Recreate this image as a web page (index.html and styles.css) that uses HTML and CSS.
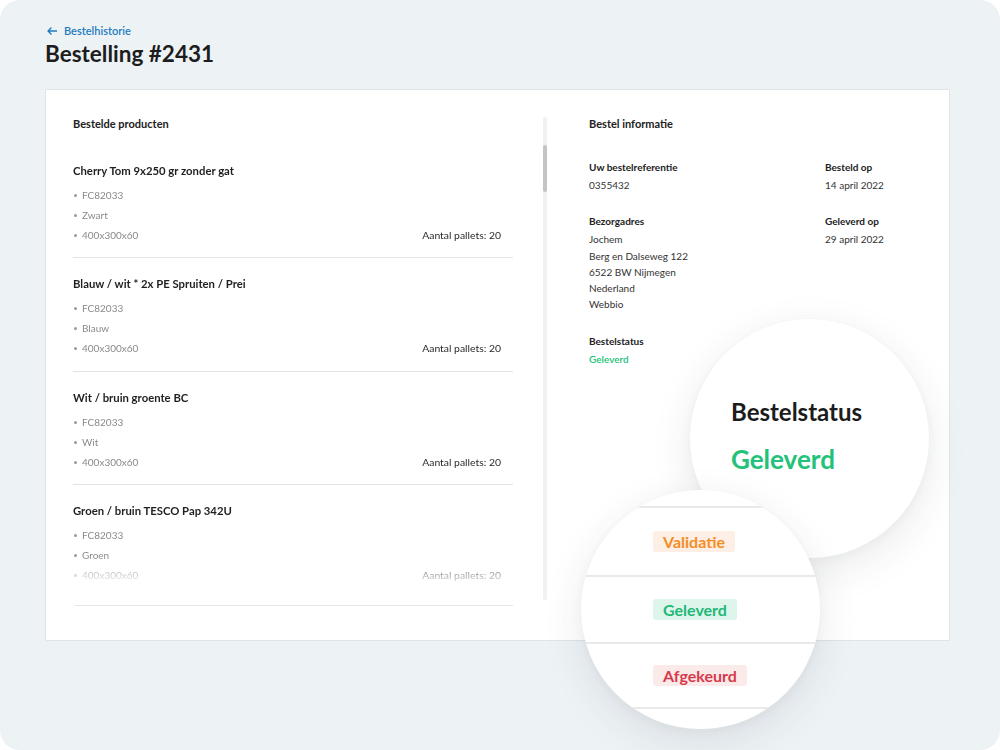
FILE: index.html
```html
<!DOCTYPE html>
<html lang="nl">
<head>
<meta charset="utf-8">
<title>Bestelling #2431</title>
<link rel="stylesheet" href="styles.css">
</head>
<body>
<div class="frame">
  <a class="back" href="#">
    <svg class="back-icon" width="10" height="8" viewBox="0 0 10 8" aria-hidden="true">
      <path d="M1 4H10M4 1L1 4L4 7" fill="none" stroke="currentColor" stroke-width="1.4" stroke-linecap="round" stroke-linejoin="round"/>
    </svg>
    Bestelhistorie
  </a>
  <h1 class="title">Bestelling #2431</h1>

  <section class="card">
    <div class="products">
      <div class="products-main">
        <h2 class="section-title">Bestelde producten</h2>
        <div class="product-list">
          <article class="product">
            <h3 class="product-name">Cherry Tom 9x250 gr zonder gat</h3>
            <ul class="specs">
              <li>FC82033</li>
              <li>Zwart</li>
              <li class="spec-last"><span>400x300x60</span><span class="pallets">Aantal pallets: 20</span></li>
            </ul>
          </article>
          <article class="product">
            <h3 class="product-name">Blauw / wit * 2x PE Spruiten / Prei</h3>
            <ul class="specs">
              <li>FC82033</li>
              <li>Blauw</li>
              <li class="spec-last"><span>400x300x60</span><span class="pallets">Aantal pallets: 20</span></li>
            </ul>
          </article>
          <article class="product">
            <h3 class="product-name">Wit / bruin groente BC</h3>
            <ul class="specs">
              <li>FC82033</li>
              <li>Wit</li>
              <li class="spec-last"><span>400x300x60</span><span class="pallets">Aantal pallets: 20</span></li>
            </ul>
          </article>
          <article class="product">
            <h3 class="product-name">Groen / bruin TESCO Pap 342U</h3>
            <ul class="specs">
              <li>FC82033</li>
              <li>Groen</li>
              <li class="spec-last"><span>400x300x60</span><span class="pallets">Aantal pallets: 20</span></li>
            </ul>
          </article>
        </div>
        <div class="list-end"></div>
      </div>
      <div class="scrollbar"><div class="scrollbar-thumb"></div></div>
    </div>

    <div class="info">
      <h2 class="section-title">Bestel informatie</h2>
      <dl class="info-grid">
        <div class="field">
          <dt>Uw bestelreferentie</dt>
          <dd>0355432</dd>
        </div>
        <div class="field">
          <dt>Besteld op</dt>
          <dd>14 april 2022</dd>
        </div>
        <div class="field">
          <dt>Bezorgadres</dt>
          <dd>Jochem<br>Berg en Dalseweg 122<br>6522 BW Nijmegen<br>Nederland<br>Webbio</dd>
        </div>
        <div class="field">
          <dt>Geleverd op</dt>
          <dd>29 april 2022</dd>
        </div>
        <div class="field">
          <dt>Bestelstatus</dt>
          <dd class="status-ok">Geleverd</dd>
        </div>
      </dl>
    </div>
  </section>

  <div class="lens lens-status">
    <div class="lens-label">Bestelstatus</div>
    <div class="lens-value">Geleverd</div>
  </div>

  <div class="lens lens-badges">
    <div class="badge-row"><span class="badge badge-pending">Validatie</span></div>
    <div class="badge-row"><span class="badge badge-ok">Geleverd</span></div>
    <div class="badge-row"><span class="badge badge-rejected">Afgekeurd</span></div>
  </div>
</div>
</body>
</html>
```

FILE: styles.css
```css
* {
  box-sizing: border-box;
}

html,
body {
  margin: 0;
  padding: 0;
  background: #ffffff;
}

body {
  font-family: Lato, "Noto Sans", "Liberation Sans", sans-serif;
  color: #222222;
}

.frame {
  position: relative;
  width: 1000px;
  height: 750px;
  overflow: hidden;
  background: #edf2f5;
  border-radius: 20px;
  padding: 22px 50px 0 45px;
}

/* back link + page title */
.back {
  display: flex;
  align-items: center;
  gap: 7px;
  margin-left: 2px;
  height: 17px;
  font-size: 11px;
  font-weight: 600;
  line-height: 17px;
  color: #1d7cc0;
  text-decoration: none;
}

.back-icon {
  display: block;
}

.title {
  margin: 0;
  height: 30px;
  font-size: 22.5px;
  font-weight: 700;
  line-height: 30px;
  color: #1d1d1d;
}

.card {
  display: flex;
  margin-top: 20px;
  height: 552px;
  background: #ffffff;
  border: 1px solid #dfe4e7;
  border-radius: 1px;
  padding: 26px 27px 0 27px;
  gap: 42px;
}

.section-title {
  margin: 0;
  font-size: 11px;
  font-weight: 700;
  line-height: 16px;
  color: #222222;
}

/* left column */
.products {
  display: flex;
  gap: 30px;
  width: 474px;
  flex: none;
}

.products-main {
  width: 440px;
}

/* scrolled list, fading out at the bottom edge */
.product-list {
  margin-top: 30px;
  height: 438px;
  overflow: hidden;
  -webkit-mask-image: linear-gradient(to bottom, #000 90%, rgba(0, 0, 0, 0.3) 95%, transparent 100%);
  mask-image: linear-gradient(to bottom, #000 90%, rgba(0, 0, 0, 0.3) 95%, transparent 100%);
}

.product {
  border-bottom: 1px solid #e3e3e3;
  padding-bottom: 12px;
  margin-bottom: 17px;
}

.product-name {
  margin: 0;
  font-size: 11.3px;
  font-weight: 700;
  line-height: 18px;
  color: #1f1f1f;
}

.specs {
  list-style: none;
  margin: 5px 0 0;
  padding: 0 12px 0 0;
}

.specs li {
  position: relative;
  padding-left: 9px;
  font-size: 10px;
  line-height: 20.1px;
  color: #8a8a8a;
}

.specs li::before {
  content: "";
  position: absolute;
  left: 1px;
  top: 9px;
  width: 3px;
  height: 3px;
  border-radius: 50%;
  background: #9a9a9a;
}

.spec-last {
  display: flex;
  justify-content: space-between;
}

.pallets {
  font-size: 10.4px;
  color: #2a2a2a;
}

.list-end {
  margin-top: 5px;
  margin-left: 2px;
  border-top: 1px solid #e6e6e6;
}

.scrollbar {
  width: 4px;
  height: 483px;
  margin-top: 1px;
  background: #f1f1f1;
  border-radius: 2px;
}

.scrollbar-thumb {
  width: 4px;
  height: 47px;
  margin-top: 28px;
  background: #c4c4c4;
  border-radius: 2px;
}

/* right column */
.info {
  flex: 1;
}

.info-grid {
  display: grid;
  grid-template-columns: 236px 1fr;
  row-gap: 20px;
  margin: 27px 0 0;
}

.field dt {
  font-size: 10px;
  font-weight: 700;
  line-height: 16px;
  color: #222222;
}

.field dd {
  margin: 2px 0 0;
  font-size: 10px;
  line-height: 16.3px;
  color: #333333;
}

.field dd.status-ok {
  color: #22c27a;
  font-weight: 600;
}

/* magnified callouts laid over the card */
.lens {
  position: absolute;
  width: 239px;
  height: 239px;
  border-radius: 50%;
  background: #ffffff;
  overflow: hidden;
  box-shadow: 0 12px 40px rgba(40, 50, 60, 0.1), 0 2px 10px rgba(40, 50, 60, 0.04);
}

.lens-status {
  left: 690px;
  top: 319px;
  padding: 78px 0 0 41px;
}

.lens-label {
  font-size: 24px;
  font-weight: 700;
  line-height: 30px;
  color: #1c1c1c;
}

.lens-value {
  margin-top: 16px;
  font-size: 26px;
  font-weight: 700;
  line-height: 32px;
  color: #22c27a;
}

.lens-badges {
  left: 581px;
  top: 490px;
  padding-top: 16px;
}

.badge-row {
  display: flex;
  align-items: center;
  height: 67px;
  padding-left: 72px;
  border-top: 2px solid #e9e9e9;
}

.badge-row:first-child {
  height: 69px;
}

.badge-row:last-child {
  border-bottom: 2px solid #e9e9e9;
}

.badge {
  display: inline-block;
  padding: 0 10px;
  height: 21px;
  border-radius: 3px;
  font-size: 16px;
  font-weight: 700;
  line-height: 21px;
}

.badge-pending {
  color: #f78d1e;
  background: #fdeee6;
}

.badge-ok {
  color: #22b877;
  background: #ddf5eb;
}

.badge-rejected {
  color: #d83a4c;
  background: #fbeaea;
}
```
